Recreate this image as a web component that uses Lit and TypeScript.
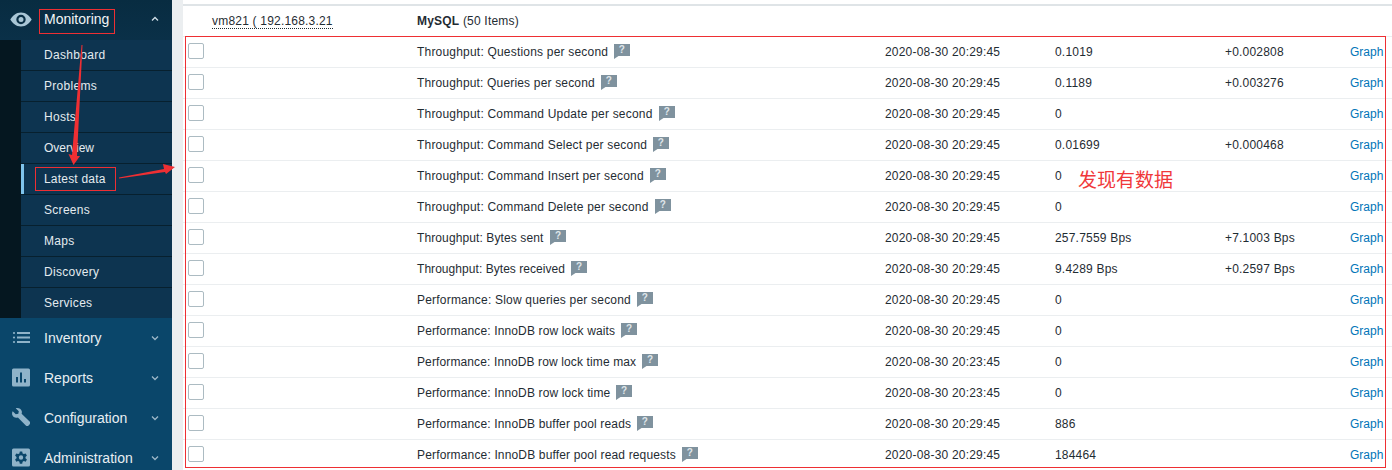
import { LitElement, html, css, svg } from "lit";
import { customElement } from "lit/decorators.js";

const sub = ["Dashboard", "Problems", "Hosts", "Overview", "Latest data", "Screens", "Maps", "Discovery", "Services"];
const T = "2020-08-30 20:29:45";
const T2 = "2020-08-30 20:23:45";
// name, time, value, change, letter-spacing of the name
const rows: [string, string, string, string, number][] = [
  ["Throughput: Questions per second", T, "0.1019", "+0.002808", 0.2],
  ["Throughput: Queries per second", T, "0.1189", "+0.003276", 0.17],
  ["Throughput: Command Update per second", T, "0", "", 0.2],
  ["Throughput: Command Select per second", T, "0.01699", "+0.000468", 0.2],
  ["Throughput: Command Insert per second", T, "0", "", 0.2],
  ["Throughput: Command Delete per second", T, "0", "", 0.2],
  ["Throughput: Bytes sent", T, "257.7559 Bps", "+7.1003 Bps", 0.11],
  ["Throughput: Bytes received", T, "9.4289 Bps", "+0.2597 Bps", 0.05],
  ["Performance: Slow queries per second", T, "0", "", 0.2],
  ["Performance: InnoDB row lock waits", T, "0", "", 0.14],
  ["Performance: InnoDB row lock time max", T2, "0", "", 0.12],
  ["Performance: InnoDB row lock time", T2, "0", "", 0.14],
  ["Performance: InnoDB buffer pool reads", T, "886", "", 0.15],
  ["Performance: InnoDB buffer pool read requests", T, "184464", "", 0.155],
];

const chevDown = html`<svg class="chev" width="8" height="6" viewBox="0 0 8 6"><path d="M1 1.500 4 4.500 7 1.500" fill="none" stroke="#9db7c8" stroke-width="1.300"/></svg>`;
const chevUp = html`<svg class="chev" width="8" height="6" viewBox="0 0 8 6"><path d="M1 4.500 4 1.500 7 4.500" fill="none" stroke="#cfdde6" stroke-width="1.300"/></svg>`;
const icons: Record<string, unknown> = {
  Inventory: svg`<circle cx="2" cy="5" r="1.100"/><circle cx="2" cy="9.500" r="1.100"/><circle cx="2" cy="14" r="1.100"/><rect x="5" y="4" width="13" height="2"/><rect x="5" y="8.500" width="13" height="2"/><rect x="5" y="13" width="13" height="2"/>`,
  Reports: svg`<path fill-rule="evenodd" d="M1.500 0.500h15a1.500 1.500 0 0 1 1.500 1.500v15a1.500 1.500 0 0 1-1.500 1.500h-15A1.500 1.500 0 0 1 0 17V2A1.500 1.500 0 0 1 1.500 .5ZM4 9v5.500h2V9Zm4-4.500v10h2v-10Zm4 6.500v3.500h2V11Z"/>`,
  Configuration: svg`<path d="M0.700 3.300 3.800 6.300 6.300 5.800 6.800 3.300 3.700 0.300C6.200-.5 9 .6 9.700 3c.3 1 .2 2-.1 2.700l8 7.800c.8.8.8 2 .1 2.800l-1.100 1.100c-.8.800-2 .8-2.800 0L5.900 9.500C3.300 10.200.9 9 .2 6.700-.1 5.600.1 4.300.7 3.300Z"/>`,
  Administration: svg`<path fill-rule="evenodd" d="M1.500 .5h15A1.500 1.500 0 0 1 18 2v15a1.500 1.500 0 0 1-1.500 1.500h-15A1.500 1.500 0 0 1 0 17V2A1.500 1.500 0 0 1 1.500 .5ZM7.800 3.500l-.4 1.900-1.300.7-1.800-.6-1.200 2.100 1.400 1.300v1.400l-1.400 1.300 1.200 2.100 1.800-.6 1.300.7.400 1.900h2.400l.4-1.900 1.300-.7 1.800.6 1.200-2.100-1.400-1.300V8.900l1.400-1.300-1.200-2.100-1.800.6-1.300-.7-.4-1.900ZM9 7.300a2.200 2.200 0 1 1 0 4.400 2.200 2.200 0 0 1 0-4.400Z"/>`,
};

@customElement("app-root")
export class AppRoot extends LitElement {
  static styles = css`
    :host { display: block; width: 1392px; height: 470px; overflow: hidden; position: relative; font-family: "Liberation Sans", Arial, sans-serif; font-size: 12px; background: #fff; }
    .page { display: flex; height: 470px; overflow: hidden; }
    .side { width: 172px; flex: none; background: #0a466a; color: #f2f4f6; display: flex; flex-direction: column; }
    .mon { height: 40px; flex: none; background: linear-gradient(#082c41, #0a3048); display: flex; align-items: center; font-size: 14px; padding-left: 10px; box-sizing: border-box; }
    .mon svg.eye { margin-right: 12px; margin-top: -2px; }
    .mon .lbl { width: 107px; position: relative; top: -1px; }
    .mon .chev { margin-top: -3px; }
    .subwrap { background: #051720; padding-left: 21px; flex: none; height: 278px; }
    .sub { background: #0d3450; height: 278px; display: flex; flex-direction: column; }
    .sub div { height: 31px; box-sizing: border-box; border-bottom: 1px solid #07202e; padding-left: 23px; display: flex; align-items: center; flex: none; color: #e4ebef; letter-spacing: .3px; }
    .sub div:last-child { border-bottom-color: transparent; }
    .sub div.sel { box-shadow: inset 3px 0 0 #7fc4ec; letter-spacing: .2px; }
    .sub div.tight { letter-spacing: 0; }
    .top { height: 40px; flex: none; display: flex; align-items: center; font-size: 14px; color: #e8eef2; position: relative; padding-left: 44px; box-sizing: border-box; }
    .top .ic { position: absolute; left: 12px; top: 10px; fill: #8fb3c9; }
    .top .lbl { width: 107px; }
    .gut { width: 11px; flex: none; background: #ebeef0; }
    .main { flex: 1; min-width: 0; }
    .topline { height: 4px; }
    .bar { height: 2px; background: #dfe4e7; }
    .row { display: grid; grid-template-columns: 29px 205px 468px 170px 170px 125px 1fr; height: 31px; box-sizing: border-box; border-bottom: 1px solid #ebeef0; align-items: center; color: #1f2c33; white-space: nowrap; letter-spacing: .2px; }
    .row > span { display: block; }
    .cb { width: 16px; height: 16px; box-sizing: border-box; border: 1px solid #acbbc2; border-radius: 2px; margin-left: 5px; margin-top: -2px; background: #fff; }
    .host { grid-column: 2; }
    .host a { border-bottom: 1px dotted #1f2c33; color: #1f2c33; }
    .name { display: flex !important; align-items: center; }
    .q { margin-left: 6px; margin-top: -1px; flex: none; }
    .link { color: #0275b8; letter-spacing: 0; }
    .over { position: absolute; inset: 0; pointer-events: none; }
    .note { position: absolute; left: 1078px; top: 167px; font-size: 19px; line-height: 24px; color: #f0383a; font-family: "Noto Sans CJK SC", sans-serif; }
    .box { position: absolute; border: 1px solid #ee2f33; box-sizing: border-box; }
    .b1 { left: 39px; top: 9px; width: 76px; height: 25px; }
    .b2 { left: 35px; top: 167px; width: 81px; height: 24px; }
    .b3 { left: 185px; top: 36px; width: 1201px; height: 432px; }
    .arrows { position: absolute; left: 0; top: 0; }
  `;

  render() {
    return html`
      <div class="page">
        <nav class="side">
          <div class="mon">
            <svg class="eye" width="22" height="15" viewBox="0 0 22 15"><path fill-rule="evenodd" fill="#a9c6d6" d="M11 .5C6 .5 2.300 4 .3 7.500 2.300 11 6 14.500 11 14.500S19.700 11 21.700 7.500C19.700 4 16 .5 11 .5Zm0 2.300a4.700 4.700 0 1 1 0 9.400 4.700 4.700 0 0 1 0-9.400Zm0 2.200a2.500 2.500 0 1 0 0 5 2.500 2.500 0 0 0 0-5Z"/></svg>
            <span class="lbl">Monitoring</span>${chevUp}
          </div>
          <div class="subwrap"><div class="sub">
            ${sub.map((s) => html`<div class=${s === "Latest data" ? "sel" : s === "Overview" ? "tight" : ""}>${s}</div>`)}
          </div></div>
          ${Object.keys(icons).map((k) => html`<div class="top">
            <svg class="ic" width="18" height="19" viewBox="0 0 18 19">${icons[k]}</svg>
            <span class="lbl">${k}</span>${chevDown}
          </div>`)}
        </nav>
        <div class="gut"></div>
        <div class="main">
          <div class="topline"></div>
          <div class="bar"></div>
          <div class="row">
            <span></span>
            <span class="host"><a>vm821 ( 192.168.3.21</a></span>
            <span><b>MySQL</b> (50 Items)</span>
          </div>
          ${rows.map((r) => html`<div class="row">
            <span class="cb"></span><span></span>
            <span class="name" style="letter-spacing:${r[4]}px">${r[0]}
              <svg class="q" width="16" height="15" viewBox="0 0 16 15"><path fill="#7f929e" d="M0 0h16v12H4.500L0 15Z"/><text x="8" y="9" font-size="10" font-weight="700" fill="#dfe6ea" text-anchor="middle" font-family="Liberation Sans">?</text></svg>
            </span>
            <span>${r[1]}</span><span>${r[2]}</span><span>${r[3]}</span><span class="link">Graph</span>
          </div>`)}
        </div>
      </div>
      <div class="over">
        <div class="box b1"></div>
        <div class="box b2"></div>
        <div class="box b3"></div>
        <svg class="arrows" width="1392" height="470">
          <path d="M81.500 45 L82.500 45 L77 156 L80 156 L73.500 165 L68.500 154 L72 155Z" fill="#ee2f33"/>
          <path d="M119 177.500 L164 169 L163 164 L175 167 L166 174 L165 172 L119 178.500Z" fill="#ee2f33"/>
        </svg>
        <div class="note">发现有数据</div>
      </div>
    `;
  }
}
